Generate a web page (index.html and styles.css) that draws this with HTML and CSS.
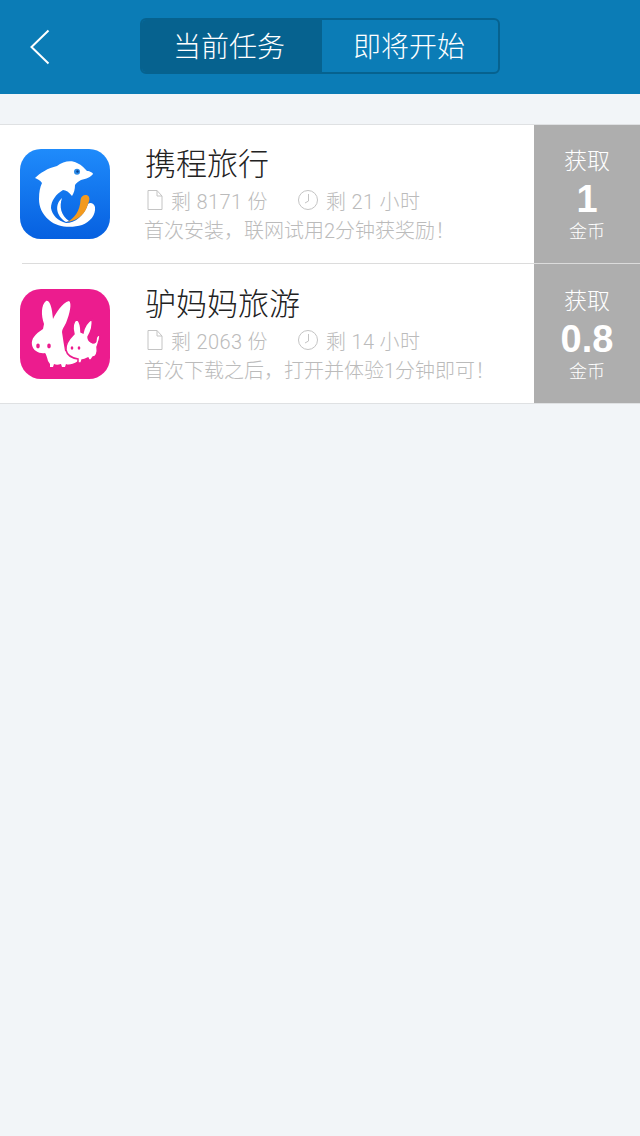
FILE: index.html
```html
<!DOCTYPE html>
<html lang="en">
<head>
    <meta charset="UTF-8">
    <meta name="viewport" content="width=device-width, initial-scale=1.0">
    <title>当前任务</title>
    <link rel="stylesheet" href="styles.css">
</head>
<body>
    <header class="topbar">
        <svg class="back" width="22" height="36" viewBox="0 0 22 36">
            <path d="M19.5 1.5 L2.5 18 L19.5 34.5" fill="none" stroke="#fff" stroke-width="2"/>
        </svg>
        <div class="tabs">
            <div class="tab active">当前任务</div>
            <div class="tab">即将开始</div>
        </div>
    </header>

    <div class="list">
        <div class="row">
            <div class="icon icon-blue">
                <svg width="90" height="90" viewBox="0 0 90 90">
                    <path fill="#fff" d="M15 29 C20 24 28 19 37 17 C43 12 52 11 57 14 C62 16 65 20 67 22 C70 22 73 24 73 25 C71 28 66 30 61 31 C58 33 56 34 55 36 C55 40 54 44 52 47 C49 43 46 41 43 41 C36 45 31 52 31 59 C32 66 38 72 46 74 C55 74 64 67 68 55 C70 53 74 54 75 58 C76 66 70 73 62 76 C52 79 38 79 29 71 C22 65 19 58 19 50 C19 43 20 38 22 34 C20 31 17 30 15 29 Z"/>
                    <path fill="#fff" d="M42 49 C35 55 35 66 46 73 L49 72 C41 66 39 58 42 49 Z"/>
                    <path fill="#f39a1e" d="M60.5 51 C61 46 67 44.5 69 48 C70 50 69 53 68 55 C66 64 58 72 47 73 C54 70 60 62 60.5 51 Z"/>
                    <circle cx="57" cy="22.7" r="3" fill="#2a8be8"/>
                    <circle cx="57.5" cy="22.5" r="1.2" fill="#0b3f8a"/>
                </svg>
            </div>
            <div class="info">
                <div class="name">携程旅行</div>
                <div class="meta">
                    <span class="meta-item">
                        <svg width="16" height="20" viewBox="0 0 16 20"><path d="M1 .5 H10 L15 6 V19.5 H1 Z M10 .5 V6 H15" fill="none" stroke="#c4c4c4"/></svg>
                        <span>剩 8171 份</span>
                    </span>
                    <span class="meta-item">
                        <svg width="20" height="20" viewBox="0 0 20 20"><circle cx="10" cy="10" r="9.5" fill="none" stroke="#c4c4c4"/><path d="M10.5 4 V11 L7 13" fill="none" stroke="#c4c4c4"/></svg>
                        <span>剩 21 小时</span>
                    </span>
                </div>
                <div class="desc">首次安装，联网试用2分钟获奖励！</div>
            </div>
            <div class="reward">
                <div class="reward-label">获取</div>
                <div class="reward-num">1</div>
                <div class="reward-unit">金币</div>
            </div>
        </div>
        <div class="row">
            <div class="icon icon-pink">
                <svg width="90" height="90" viewBox="0 0 90 90" fill="#fff">
                    <path d="M24 35 C21 26 21 16 26 12 C29 11 31 16 32 22 L33 30 C36 24 42 14 49 12 C52 14 50 24 46 34 C44 38 42 40 42 43 C43 50 44 56 45 62 L58 66 L58 72 C52 76 48 76 46 75 L45 78 H42 L41 75 C38 76 36 76 34 75 L33 78 H30 V75 L28 72 C27 68 26 65 25 64 C20 65 13 62 12 56 C11 50 15 45 23 40 Z"/>
                    <path stroke="#ec1c8e" stroke-width="1.5" d="M54 45 C52 38 53 33 57 30 C60 33 61 38 61 43 L63 44 C64 38 67 33 72 30 C73 36 71 43 68 48 C68 52 70 53 73 54 C75 54 76 53 76 51 C76 48 78 46 80 46 C80 51 78 55 77 58 C78 64 76 68 73 68 L71 71 H69 L68 69 C66 70 64 71 62 71 L61 74 H58 V70 C52 69 47 66 46 61 C45 55 49 50 54 45 Z"/>
                    <ellipse cx="18" cy="57" rx="1.8" ry="2.4" fill="#ec1c8e"/>
                    <ellipse cx="29" cy="57" rx="1.8" ry="2.4" fill="#ec1c8e"/>
                    <ellipse cx="52" cy="59" rx="1.3" ry="1.8" fill="#ec1c8e"/>
                    <ellipse cx="59" cy="59" rx="1.3" ry="1.8" fill="#ec1c8e"/>
                </svg>
            </div>
            <div class="info">
                <div class="name">驴妈妈旅游</div>
                <div class="meta">
                    <span class="meta-item">
                        <svg width="16" height="20" viewBox="0 0 16 20"><path d="M1 .5 H10 L15 6 V19.5 H1 Z M10 .5 V6 H15" fill="none" stroke="#c4c4c4"/></svg>
                        <span>剩 2063 份</span>
                    </span>
                    <span class="meta-item">
                        <svg width="20" height="20" viewBox="0 0 20 20"><circle cx="10" cy="10" r="9.5" fill="none" stroke="#c4c4c4"/><path d="M10.5 4 V11 L7 13" fill="none" stroke="#c4c4c4"/></svg>
                        <span>剩 14 小时</span>
                    </span>
                </div>
                <div class="desc">首次下载之后，打开并体验1分钟即可！</div>
            </div>
            <div class="reward">
                <div class="reward-label">获取</div>
                <div class="reward-num">0.8</div>
                <div class="reward-unit">金币</div>
            </div>
        </div>
    </div>
</body>
</html>
```

FILE: styles.css
```css
/* General Styles */
body {
    margin: 0;
    min-height: 1136px;
    background: #f2f5f8;
    font-family: "Liberation Sans", "Noto Sans CJK SC", sans-serif;
    overflow: hidden;
}

/* Top bar */
.topbar {
    height: 94px;
    box-sizing: border-box;
    padding-bottom: 2px;
    background: #0b7cb6;
    display: grid;
    grid-template-columns: 140px 360px;
    align-items: center;
}
.back {
    margin: 2px 0 0 29px;
}
.tabs {
    height: 56px;
    box-sizing: border-box;
    border: 2px solid #06628f;
    border-radius: 6px;
    display: flex;
    overflow: hidden;
}
.tab {
    flex: 0 0 176px;
    box-sizing: border-box;
    padding: 0 2px 2px 0;
    display: flex;
    align-items: center;
    justify-content: center;
    color: #fff;
    font-size: 28px;
    font-weight: 300;
}
.tab.active {
    flex: 0 0 180px;
    padding-right: 6px;
    background: #06628f;
}

/* Task list */
.list {
    margin-top: 30px;
    background: #fff;
    border-top: 1px solid #dfe1e3;
    border-bottom: 1px solid #dfe1e3;
}
.row {
    height: 138px;
    display: flex;
}
.row + .row {
    height: 140px;
    box-sizing: border-box;
    border-top: 1px solid #dcdcdc;
    margin-left: 22px;
}
.row + .row .icon {
    margin-left: -2px;
    margin-top: 25px;
}
.icon {
    width: 90px;
    height: 90px;
    margin: 24px 0 0 20px;
    border-radius: 21px;
    overflow: hidden;
    flex: none;
}
.icon svg {
    display: block;
}
.icon-blue {
    background: linear-gradient(#1f8bfb, #0660e0);
}
.icon-pink {
    background: #ec1c8e;
}
.info {
    flex: 1;
    margin-left: 35px;
    padding-top: 18px;
    min-width: 0;
}
.row + .row .info {
    padding-top: 19px;
}
.name {
    font-size: 31px;
    line-height: 40px;
    padding-top: 2px;
    color: #222;
    font-weight: 300;
}
.meta {
    display: flex;
    gap: 30px;
    height: 30px;
    align-items: center;
    color: #bbb;
    font-family: Roboto, "Noto Sans CJK SC", sans-serif;
    font-size: 20px;
    font-weight: 300;
    letter-spacing: 0.35px;
}
.meta-item {
    display: flex;
    align-items: center;
    gap: 8px;
    white-space: nowrap;
}
.meta-item:first-child {
    margin-left: 2px;
}
.desc {
    margin: 1px 0 0 -1px;
    color: #bbb;
    font-family: Roboto, "Noto Sans CJK SC", sans-serif;
    font-size: 20px;
    font-weight: 300;
    line-height: 30px;
    white-space: nowrap;
}

/* Reward column */
.reward {
    width: 106px;
    flex: none;
    background: #aeaeae;
    color: #fff;
    display: flex;
    flex-direction: column;
    align-items: center;
    padding-top: 21px;
    box-sizing: border-box;
}
.row + .row .reward {
    padding-top: 22px;
}
.reward-label {
    font-size: 23px;
    font-weight: 300;
    line-height: 30px;
}
.reward-num {
    font-size: 38px;
    font-weight: 700;
    line-height: 46px;
}
.reward-unit {
    font-size: 18px;
    font-weight: 300;
    line-height: 20px;
}
```
